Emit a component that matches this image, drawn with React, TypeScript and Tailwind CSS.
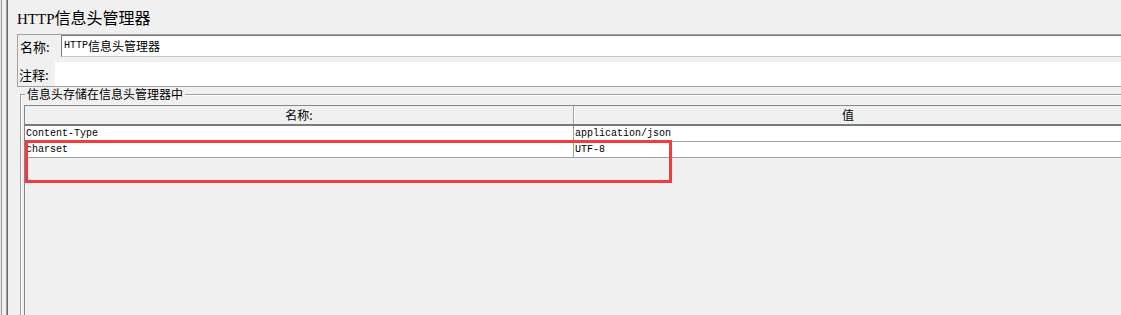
import React from "react";

const CJK = '"Noto Sans CJK SC", "Noto Sans", sans-serif';
const MONO = '"Liberation Mono", "DejaVu Sans Mono", monospace';

export default function App() {
  return (
    <div
      className="w-[1121px] h-[315px] bg-[#f0f0f0] overflow-hidden flex text-black relative"
      style={{ fontFamily: CJK }}
    >
      {/* left window edges */}
      <div className="w-[1px] bg-[#e3e3e3]" />
      <div className="w-[1px] bg-[#a0a0a0]" />
      <div className="w-[4px]" />
      <div className="w-[1px] bg-[#a0a0a0]" />
      <div className="w-[1px] bg-[#696969]" />

      <div className="flex-1 flex flex-col pl-[9px] min-w-0">
        {/* title */}
        <div className="h-[34px] pt-[7px] text-[16px] leading-[20px] whitespace-nowrap">
          <span className="text-[15px]" style={{ fontFamily: '"Liberation Serif", serif' }}>HTTP</span>
          信息头管理器
        </div>

        {/* name / comment panel */}
        <div className="flex flex-col border-t border-l border-b border-[#a0a0a0]">
          <div className="h-[22px] flex items-stretch">
            <div className="w-[43px] pl-[2px] flex items-center text-[13px] leading-none whitespace-nowrap">名称:</div>
            <div className="flex-1 bg-white border-t border-l border-[#7a7a7a] border-b border-b-[#c8c8c8] flex items-center pl-[2px] text-[12px] leading-none whitespace-nowrap">
              <span className="text-[10px]" style={{ fontFamily: MONO }}>HTTP</span>
              <span>信息头管理器</span>
            </div>
          </div>
          <div className="h-[5px]" />
          <div className="h-[24px] flex items-stretch">
            <div className="w-[37px] pl-[1px] flex items-center text-[13px] leading-none whitespace-nowrap">注释:</div>
            <div className="flex-1 bg-white" />
          </div>
        </div>

        {/* group box */}
        <div className="mt-[7px] ml-[3px] flex-1 relative border-t border-l border-[#a0a0a0] flex flex-col">
          <div className="absolute left-[4px] -top-[8px] px-[2px] bg-[#f0f0f0] text-[12px] leading-[14px] whitespace-nowrap">
            信息头存储在信息头管理器中
          </div>
          <div className="flex-1 border-t border-l border-white pl-[2px] pt-[9px] flex flex-col">
            {/* table */}
            <div className="flex-1 flex flex-col border-l border-t border-[#828790]">
              {/* header */}
              <div className="h-[20px] flex bg-[#f0f0f0] border-b-2 border-[#7a7a7a] text-[12px] leading-none">
                <div className="w-[549px] flex items-center justify-center border-r border-[#a0a0a0]">名称:</div>
                <div className="flex-1 flex items-center justify-center border-l border-white">值</div>
              </div>
              {/* rows */}
              {[
                ["Content-Type", "application/json"],
                ["charset", "UTF-8"],
              ].map(([k, v]) => (
                <div
                  key={k}
                  className="h-[16px] flex bg-white border-b border-[#a0a0a0] text-[10px] leading-none"
                  style={{ fontFamily: MONO }}
                >
                  <div className="w-[549px] flex items-center pl-[1px] pt-[1px] border-r border-[#a0a0a0]">{k}</div>
                  <div className="flex-1 flex items-center pl-[1px] pt-[1px]">{v}</div>
                </div>
              ))}
              <div className="flex-1" />
            </div>
          </div>
        </div>
      </div>

      {/* red annotation box */}
      <div className="absolute left-[25px] top-[140px] w-[647px] h-[43px] border-[3px] border-[#f43a3a]" />
    </div>
  );
}
